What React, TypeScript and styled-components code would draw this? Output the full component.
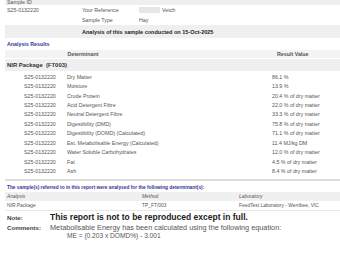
import React from 'react';
import styled, { createGlobalStyle } from 'styled-components';

const GlobalStyle = createGlobalStyle`
  body {
    margin: 0;
    background: #ffffff;
    font-family: 'Liberation Sans', Arial, sans-serif;
    font-size: 5.3px;
    color: #555;
  }
`;

const Page = styled.div`
  width: 335px;
  padding-left: 5px;
  overflow: hidden;
`;

const Band = styled.div<{ $height: number; $bg?: string }>`
  height: ${p => p.$height}px;
  background: ${p => p.$bg || '#efefef'};
  display: flex;
  align-items: center;
  padding-left: 2px;
`;

const TopBand = styled(Band)`
  align-items: flex-end;
  line-height: 6px;
`;

const InfoGrid = styled.div`
  display: grid;
  grid-template-columns: 75px 57px 1fr;
  grid-auto-rows: 10px;
  align-items: center;
  padding: 0 0 0 2px;
`;

const Redacted = styled.span`
  display: inline-block;
  width: 21px;
  height: 6px;
  background: #e6e6e6;
  vertical-align: middle;
  margin-right: 2px;
`;

const ConductedBand = styled(Band)`
  padding-left: 77px;
  font-size: 5.5px;
  font-weight: bold;
  color: #222;
`;

const Title = styled.div<{ $top: number; $height: number; $size?: number }>`
  padding: ${p => p.$top}px 0 0 2px;
  height: ${p => p.$height}px;
  line-height: ${p => p.$height}px;
  font-size: ${p => p.$size || 5.3}px;
  font-weight: bold;
  color: #333399;
  white-space: nowrap;
`;

const HeaderBand = styled.div`
  display: grid;
  grid-template-columns: 156px 1fr;
  height: 8px;
  align-items: center;
  background: #f3f3f3;
  font-weight: bold;
  color: #555;
`;

const HeadCell = styled.div<{ $center?: boolean; $pad?: number }>`
  text-align: ${p => (p.$center ? 'center' : 'left')};
  padding-left: ${p => p.$pad || 0}px;
`;

const PackageBand = styled(Band)`
  margin-top: 1px;
  font-size: 5.9px;
  font-weight: bold;
  color: #333;
  white-space: pre;
`;

const Results = styled.div`
  padding: 1px 0 3px;
`;

const ResultRow = styled.div`
  display: grid;
  grid-template-columns: 43px 205px 1fr;
  height: 9.45px;
  align-items: center;
  padding-left: 19px;
`;

const Separator = styled.div`
  height: 2px;
  background: #dcdcdc;
`;

const MethodHeader = styled.div`
  display: grid;
  grid-template-columns: 135px 97px 1fr;
  height: 9px;
  align-items: center;
  padding-left: 2px;
  background: #f0f0f0;
  font-size: 4.9px;
  font-style: italic;
  color: #555;
`;

const MethodRow = styled(MethodHeader)`
  height: 9px;
  background: none;
  font-style: normal;
  border-bottom: 1px solid #e8e8e8;
`;

const NoteGrid = styled.div<{ $top: number }>`
  display: grid;
  grid-template-columns: 43px 1fr;
  align-items: baseline;
  padding: ${p => p.$top}px 0 0 2px;
`;

const Label = styled.div`
  font-size: 6.2px;
  font-weight: bold;
  color: #444;
`;

const NoteText = styled.div`
  font-size: 8.5px;
  line-height: 9px;
  font-weight: bold;
  color: #222;
`;

const CommentText = styled.div`
  font-size: 7.3px;
  line-height: 8px;
  color: #555;
`;

const Equation = styled.div`
  padding-left: 17px;
  font-size: 6.6px;
`;

const rows: [string, string][] = [
  ['Dry Matter', '86.1 %'],
  ['Moisture', '13.9 %'],
  ['Crude Protein', '20.4 % of dry matter'],
  ['Acid Detergent Fibre', '22.0 % of dry matter'],
  ['Neutral Detergent Fibre', '33.3 % of dry matter'],
  ['Digestibility (DMD)', '75.8 % of dry matter'],
  ['Digestibility (DOMD) (Calculated)', '71.1 % of dry matter'],
  ['Est. Metabolisable Energy (Calculated)', '11.4 MJ/kg DM'],
  ['Water Soluble Carbohydrates', '12.0 % of dry matter'],
  ['Fat', '4.5 % of dry matter'],
  ['Ash', '8.4 % of dry matter'],
];

const App: React.FC = () => (
  <Page>
    <GlobalStyle />
    <TopBand $height={5}>Sample ID</TopBand>
    <InfoGrid>
      <span>S25-0132220</span>
      <span>Your Reference</span>
      <span>
        <Redacted />
        Vetch
      </span>
      <span />
      <span>Sample Type</span>
      <span>Hay</span>
    </InfoGrid>
    <ConductedBand $height={13}>Analysis of this sample conducted on 15-Oct-2025</ConductedBand>
    <Title $top={0} $height={12}>Analysis Results</Title>
    <HeaderBand>
      <HeadCell $center>Determinant</HeadCell>
      <HeadCell $pad={116}>Result Value</HeadCell>
    </HeaderBand>
    <PackageBand $height={12}>{'NIR Package  (FT003)'}</PackageBand>
    <Results>
      {rows.map(([name, value]) => (
        <ResultRow key={name}>
          <span>S25-0132220</span>
          <span>{name}</span>
          <span>{value}</span>
        </ResultRow>
      ))}
    </Results>
    <Separator />
    <Title $top={3} $height={8} $size={4.8}>
      The sample(s) referred to in this report were analysed for the following determinant(s):
    </Title>
    <MethodHeader>
      <span>Analysis</span>
      <span>Method</span>
      <span>Laboratory</span>
    </MethodHeader>
    <MethodRow>
      <span>NIR Package</span>
      <span>TP_FT/003</span>
      <span>FeedTest Laboratory - Werribee, VIC</span>
    </MethodRow>
    <NoteGrid $top={2}>
      <Label>Note:</Label>
      <NoteText>This report is not to be reproduced except in full.</NoteText>
    </NoteGrid>
    <NoteGrid $top={2}>
      <Label>Comments:</Label>
      <CommentText>
        Metabolisable Energy has been calculated using the following equation:
        <Equation>ME = (0.203 x DOMD%) - 3.001</Equation>
      </CommentText>
    </NoteGrid>
  </Page>
);

export default App;
